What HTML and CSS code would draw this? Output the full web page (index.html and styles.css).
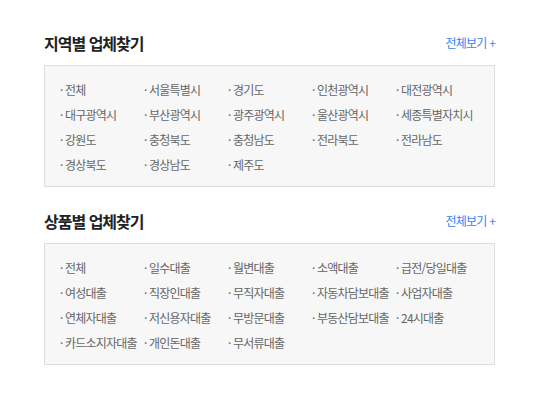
FILE: index.html
```html
<!DOCTYPE html>
<html lang="ko">
<head>
    <meta charset="UTF-8">
    <meta name="viewport" content="width=device-width, initial-scale=1.0">
    <title>업체찾기</title>
    <link rel="stylesheet" href="styles.css">
</head>
<body>
    <div class="wrap">
        <div class="section">
            <div class="section-head">
                <h2>지역별 업체찾기</h2>
                <a href="#" class="more">전체보기 +</a>
            </div>
            <ul class="list">
                <li><a href="#">· 전체</a></li>
                <li><a href="#">· 서울특별시</a></li>
                <li><a href="#">· 경기도</a></li>
                <li><a href="#">· 인천광역시</a></li>
                <li><a href="#">· 대전광역시</a></li>
                <li><a href="#">· 대구광역시</a></li>
                <li><a href="#">· 부산광역시</a></li>
                <li><a href="#">· 광주광역시</a></li>
                <li><a href="#">· 울산광역시</a></li>
                <li><a href="#">· 세종특별자치시</a></li>
                <li><a href="#">· 강원도</a></li>
                <li><a href="#">· 충청북도</a></li>
                <li><a href="#">· 충청남도</a></li>
                <li><a href="#">· 전라북도</a></li>
                <li><a href="#">· 전라남도</a></li>
                <li><a href="#">· 경상북도</a></li>
                <li><a href="#">· 경상남도</a></li>
                <li><a href="#">· 제주도</a></li>
            </ul>
        </div>

        <div class="section">
            <div class="section-head">
                <h2>상품별 업체찾기</h2>
                <a href="#" class="more">전체보기 +</a>
            </div>
            <ul class="list">
                <li><a href="#">· 전체</a></li>
                <li><a href="#">· 일수대출</a></li>
                <li><a href="#">· 월변대출</a></li>
                <li><a href="#">· 소액대출</a></li>
                <li><a href="#">· 급전/당일대출</a></li>
                <li><a href="#">· 여성대출</a></li>
                <li><a href="#">· 직장인대출</a></li>
                <li><a href="#">· 무직자대출</a></li>
                <li><a href="#">· 자동차담보대출</a></li>
                <li><a href="#">· 사업자대출</a></li>
                <li><a href="#">· 연체자대출</a></li>
                <li><a href="#">· 저신용자대출</a></li>
                <li><a href="#">· 무방문대출</a></li>
                <li><a href="#">· 부동산담보대출</a></li>
                <li><a href="#">· 24시대출</a></li>
                <li><a href="#">· 카드소지자대출</a></li>
                <li><a href="#">· 개인돈대출</a></li>
                <li><a href="#">· 무서류대출</a></li>
            </ul>
        </div>
    </div>
</body>
</html>
```

FILE: styles.css
```css
body {
    margin: 0;
    background: #fff;
    font-family: "Noto Sans CJK KR", "Noto Sans", sans-serif;
}
.wrap {
    width: 451px;
    padding: 33px 0 0 44px;
}
.section {
    margin-bottom: 24px;
}
.section-head {
    display: flex;
    justify-content: space-between;
    align-items: center;
    height: 20px;
    margin-bottom: 12px;
}
.section-head h2 {
    margin: 0;
    font-size: 16px;
    font-weight: bold;
    line-height: 20px;
    color: #222;
    letter-spacing: -1px;
}
.more {
    font-size: 12px;
    line-height: 20px;
    color: #3484f0;
    text-decoration: none;
    letter-spacing: -0.8px;
}
.list {
    display: grid;
    grid-template-columns: repeat(5, 84px);
    margin: 0;
    padding: 11px 15px 9px;
    list-style: none;
    background: #f7f7f7;
    border: 1px solid #ddd;
}
.list li {
    height: 25px;
    font-size: 12px;
    line-height: 25px;
    white-space: nowrap;
}
.list a {
    color: #666;
    text-decoration: none;
    letter-spacing: -0.8px;
}
```
